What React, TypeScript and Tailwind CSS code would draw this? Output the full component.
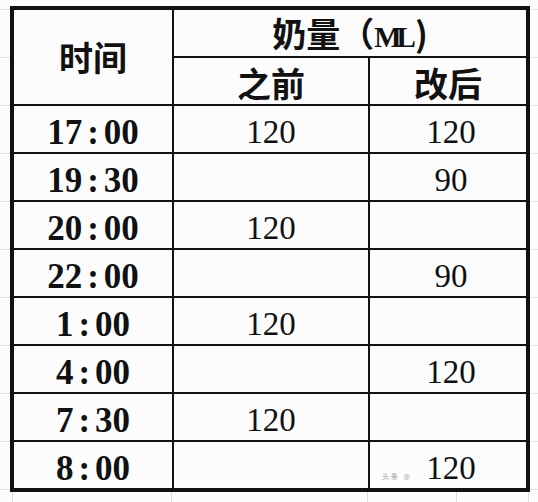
import React from 'react';

const rows: { time: string; before: string; after: string }[] = [
  { time: '17:00', before: '120', after: '120' },
  { time: '19:30', before: '', after: '90' },
  { time: '20:00', before: '120', after: '' },
  { time: '22:00', before: '', after: '90' },
  { time: '1:00', before: '120', after: '' },
  { time: '4:00', before: '', after: '120' },
  { time: '7:30', before: '120', after: '' },
  { time: '8:00', before: '', after: '120' },
];

const cjk = "font-['Noto_Sans_CJK_SC',sans-serif] font-bold text-[34px] leading-none text-[#111]";
const serif = "font-['Liberation_Serif',serif] leading-none text-[#111]";

function Time({ value }: { value: string }) {
  const [h, m] = value.split(':');
  return (
    <span className={`${serif} font-bold text-[35px] pt-[6px]`}>
      {h}
      <span className="mx-[5px]">:</span>
      {m}
    </span>
  );
}

export default function App() {
  return (
    <div className="w-[538px] h-[502px] overflow-hidden bg-[#fdfcfd] bg-[repeating-linear-gradient(to_bottom,#e4e4e4_0px,#e4e4e4_1px,transparent_1px,transparent_48px)] bg-[position:0_9px]">
      <div className="pt-[6px] pl-[10px]">
        <div className="relative grid w-[520px] grid-cols-[158px_194px_156px] grid-rows-[repeat(10,46px)] gap-[2px] bg-[#111] border-4 border-[#111]">
          <div className="row-span-2 flex items-center justify-center bg-[#fdfcfd]">
            <span className={cjk}>时间</span>
          </div>
          <div className="col-span-2 flex items-center justify-center bg-[#fdfcfd] pt-[2px]">
            <span className={cjk}>
              奶量（<span className="font-['Liberation_Serif',serif] text-[29px] tracking-[-5px]">ML</span>
              <span className="ml-[4px]">)</span>
            </span>
          </div>
          <div className="flex items-center justify-center bg-[#fdfcfd] pt-[4px]">
            <span className={cjk}>之前</span>
          </div>
          <div className="flex items-center justify-center bg-[#fdfcfd] pt-[4px]">
            <span className={cjk}>改后</span>
          </div>
          {rows.map((r, i) => (
            <React.Fragment key={i}>
              <div className="flex items-center justify-center bg-[#fdfcfd]">
                <Time value={r.time} />
              </div>
              <div className="flex items-center justify-center bg-[#fdfcfd]">
                <span className={`${serif} text-[33px] pt-[6px]`}>{r.before}</span>
              </div>
              <div className="flex items-center justify-center bg-[#fdfcfd] pl-[6px]">
                <span className={`${serif} text-[33px] pt-[6px]`}>{r.after}</span>
              </div>
            </React.Fragment>
          ))}
          <span className="absolute bottom-[8px] left-[368px] text-[7px] leading-none text-[#a0a0a0] font-['Noto_Sans_CJK_SC',sans-serif] tracking-[2px]">头条 @</span>
        </div>
        <div className="flex h-[10px]">
          <div className="w-[3px] border-r border-[#dcdcdc]" />
          <div className="w-[159px] border-r border-[#dcdcdc]" />
          <div className="w-[196px] border-r border-[#dcdcdc]" />
          <div className="w-[89px] border-r border-[#dcdcdc]" />
          <div className="w-[72px] border-r border-[#dcdcdc]" />
        </div>
      </div>
    </div>
  );
}
